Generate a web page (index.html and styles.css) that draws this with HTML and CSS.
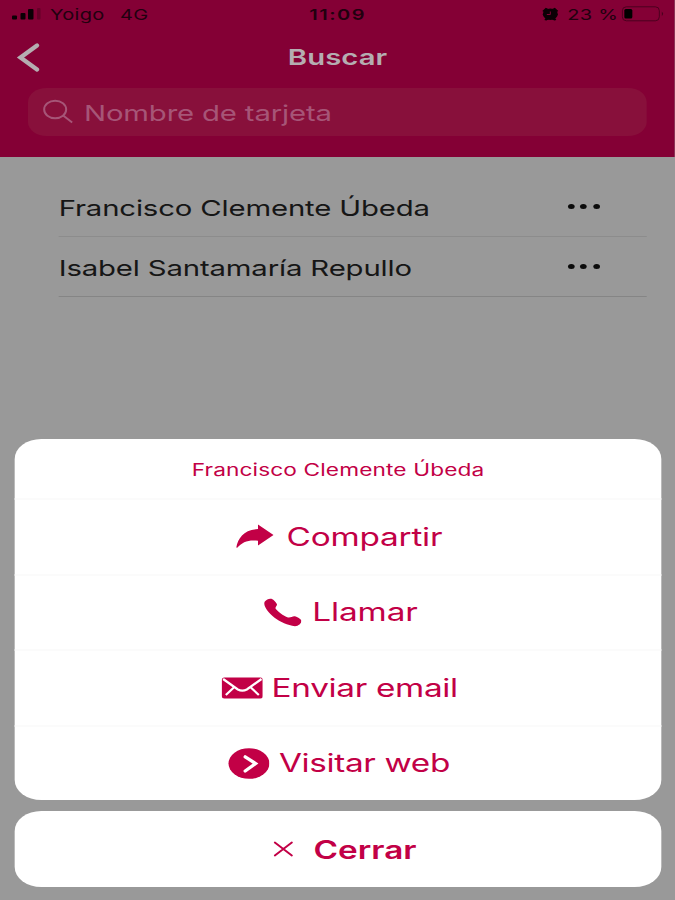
FILE: index.html
```html
<!DOCTYPE html>
<html lang="es">
<head>
<meta charset="utf-8">
<title>Buscar</title>
<link rel="stylesheet" href="styles.css">
</head>
<body>
<div class="screen">
  <header class="header">
    <div class="status">
      <svg class="signal" viewBox="0 0 30 14" preserveAspectRatio="none"><rect x="0" y="8.500" width="5" height="4" rx="1"/><rect x="8.500" y="6" width="5" height="6.500" rx="1"/><rect x="16" y="2" width="5.500" height="10.500" rx="1"/><rect x="25" y="1" width="3.500" height="11.500" rx="1" opacity=".25"/></svg>
      <span class="carrier">Yoigo</span>
      <span class="network">4G</span>
      <span class="clock">11:09</span>
      <svg class="alarm" viewBox="0 0 18 14" preserveAspectRatio="none"><ellipse cx="9" cy="7.200" rx="7.500" ry="5.800"/><path d="M1 4 4.500.8 7 2 2.500 5ZM17 4 13.500.8 11 2 15.500 5ZM3 13l2-3 3 2-3 1.500ZM15 13l-2-3-3 2 3 1.500Z"/><path d="M9 4.500V7.500H5.500" fill="none" stroke="#840035" stroke-width="1"/></svg>
      <span class="percent">23 %</span>
      <svg class="battery" viewBox="0 0 43 16" preserveAspectRatio="none"><rect x="1" y=".8" width="37" height="14" rx="4" fill="none" stroke="#4a001e"/><rect x="3" y="3" width="8" height="9.500" rx="1.500"/><path d="M40.500 5.500q2.500 2.300 0 4.600Z" fill="#4a001e"/></svg>
    </div>
    <div class="nav">
      <svg class="back" viewBox="0 0 24 30" preserveAspectRatio="none"><path d="M21 2.500 4.500 14.500 21 26.500" fill="none" stroke="#b5adb1" stroke-width="4.300" stroke-linecap="round" stroke-linejoin="miter"/></svg>
      <h1 class="title">Buscar</h1>
    </div>
    <div class="search">
      <svg class="glass" viewBox="0 0 32 26" preserveAspectRatio="none"><ellipse cx="12.500" cy="10.500" rx="11" ry="8.800"/><path d="M20.500 16.500 29.500 23.500"/></svg>
      <span class="placeholder">Nombre de tarjeta</span>
    </div>
  </header>

  <main class="list">
    <div class="contact"><span class="name">Francisco Clemente Úbeda</span><span class="more"><i></i><i></i><i></i></span></div>
    <div class="contact"><span class="name">Isabel Santamaría Repullo</span><span class="more"><i></i><i></i><i></i></span></div>
  </main>

  <section class="sheet">
    <div class="card">
      <div class="caption"><span>Francisco Clemente Úbeda</span></div>
      <div class="action share">
        <svg viewBox="0 0 38 25" preserveAspectRatio="none"><path d="M.3 23.500C2 14 8 5.500 22 5V.5L37.500 11 22 21.500V16.800C13 15.500 6 18 1.200 23.800Z"/></svg>
        <span>Compartir</span>
      </div>
      <div class="action call">
        <svg viewBox="0 0 38 29" preserveAspectRatio="none"><path d="M.8 3.500C2.500 1.200 5.500.2 7.500.8C10 2 12 4.200 13 6.300C13.300 7.800 11.200 8.500 11.500 10.500C14 14 19 17.500 24 19.500C27 20 28 18 31 18.300C33.500 19 36.500 20.700 37.500 22.500C37.500 25.500 34.500 28 31 28.200C16.500 26.500 1.500 14.500.3 6Q.1 4.500.8 3.500Z"/></svg>
        <span>Llamar</span>
      </div>
      <div class="action email">
        <svg viewBox="0 0 42 22" preserveAspectRatio="none"><rect x=".5" y=".5" width="41" height="21" rx="2.500"/><path d="M1.800 2 16.500 12.500q4.500 2.400 9 0L40.200 2M4.500 18 12.500 10.500M37.500 18 29.500 10.500" fill="none" stroke="#fff" stroke-width="2.200"/></svg>
        <span>Enviar email</span>
      </div>
      <div class="action web">
        <svg viewBox="0 0 42 31" preserveAspectRatio="none"><ellipse cx="21" cy="15.500" rx="20.500" ry="15.300"/><path d="M17.200 8.800 27.500 15.500 17.200 23" fill="none" stroke="#fff" stroke-width="3.300" stroke-linecap="round"/></svg>
        <span>Visitar web</span>
      </div>
    </div>
    <div class="card close">
      <svg viewBox="0 0 20 16" preserveAspectRatio="none"><path d="M1.500 1.500 18.500 14.500M18.500 1.500 1.500 14.500" fill="none" stroke="#c20046" stroke-width="2" stroke-linecap="round"/></svg>
      <span>Cerrar</span>
    </div>
  </section>
</div>
</body>
</html>
```

FILE: styles.css
```css
* { box-sizing: border-box; }
html, body { margin: 0; height: 900px; overflow: hidden; background: #999; }

/* The screen is laid out at 506.25px and stretched horizontally to 675px. */
.screen {
  width: 506.25px;
  height: 900px;
  display: flex;
  flex-direction: column;
  transform: scaleX(1.33333);
  transform-origin: 0 0;
  background: #999;
  font-family: Inter, "Liberation Sans", sans-serif;
  white-space: nowrap;
}
svg { display: block; flex: none; }

.header { height: 157px; background: #840035; }
.status { display: flex; align-items: center; height: 28px; padding-left: 9px; font-size: 15px; color: #21000f; }
.signal { width: 22.5px; height: 14px; fill: #0b0005; }
.carrier { width: 52.500px; margin-left: 6px; letter-spacing: .2px; }
.network { width: 142px; letter-spacing: .3px; }
.clock { width: 173.500px; font-weight: 600; letter-spacing: 1.1px; }
.alarm { width: 13.500px; height: 14px; fill: #0b0005; }
.percent { width: 40.500px; margin-left: 6.500px; letter-spacing: .2px; }
.battery { width: 32.250px; height: 16px; }

.nav { display: grid; grid-template-columns: 1fr auto 1fr; align-items: center; height: 60px; padding-left: 12px; padding-right: 12px; }
.back { width: 18px; height: 30px; }
.title { margin: 0; padding-bottom: 2px; font-size: 22px; font-weight: 600; color: #b5adb1; }
.search { display: flex; align-items: center; width: 464.250px; height: 48px; margin-left: 21px; padding-left: 11px; border-radius: 14px; background: #88103b; font-size: 22px; color: #a65577; }
.glass { width: 24px; height: 26px; fill: none; stroke: #a65577; stroke-width: 2; }
.placeholder { margin-left: 7px; padding-top: 2px; letter-spacing: -.13px; }

.list { padding: 20px 21.750px 0 44px; }
.contact { display: flex; justify-content: space-between; align-items: center; height: 60px; padding-right: 34.500px; border-bottom: 1px solid #858585; font-size: 22px; color: #161616; }
.contact:first-child { border-bottom-color: #8c8c8c; }
.name { padding-top: 2px; letter-spacing: -.12px; }
.more { display: flex; gap: 4.700px; }
.more i { width: 5px; height: 5px; border-radius: 50%; background: #0c0c0c; }

.sheet { margin-top: auto; padding: 0 10.500px 13px 11.250px; color: #c20046; }
.card { background: #fff; border-radius: 20px; }
.caption { display: flex; align-items: center; justify-content: center; height: 59.500px; padding-top: 3px; font-size: 17px; letter-spacing: .09px; }
.action { display: flex; align-items: center; justify-content: center; height: 75.500px; border-top: 2px solid #fbfbfb; font-size: 25px; letter-spacing: -.2px; fill: #c20046; }
.share { padding-left: 2px; letter-spacing: -.15px; }
.share svg { width: 28.500px; height: 25px; }
.share span { margin-left: 9.200px; }
.call { padding-left: 4px; letter-spacing: -.1px; }
.call svg { width: 28.500px; height: 29px; }
.call span { margin-left: 8px; }
.email { padding-left: 2px; letter-spacing: -.25px; }
.email svg { width: 31.500px; height: 22px; }
.email span { margin-left: 6.500px; }
.web { padding-left: 1px; letter-spacing: -.27px; }
.web svg { width: 31.500px; height: 31px; }
.web span { margin-left: 7.200px; }
.close { display: flex; align-items: center; justify-content: center; height: 76px; margin-top: 11px; padding-left: 10px; font-size: 25px; font-weight: 600; }
.close svg { width: 15px; height: 16px; }
.close span { margin-left: 15.500px; padding-top: 1px; }
```
